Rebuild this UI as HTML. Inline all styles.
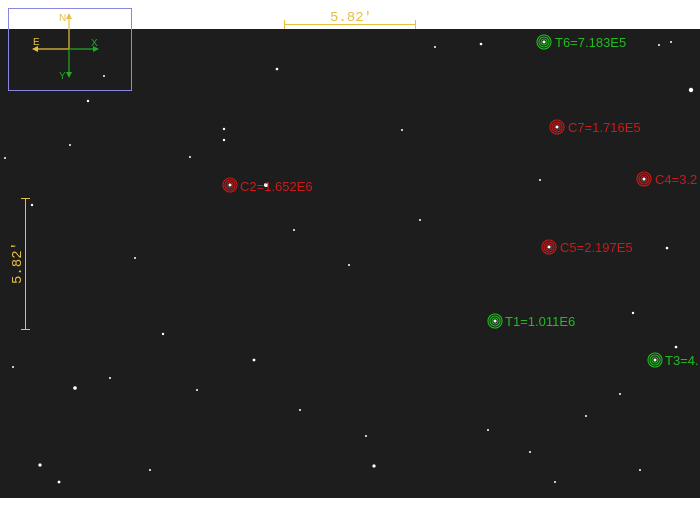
<!DOCTYPE html>
<html><head><meta charset="utf-8"><style>
html,body{margin:0;padding:0;background:#fff;width:700px;height:527px;overflow:hidden}
svg{display:block}
text{font-family:"Liberation Sans",Arial,sans-serif;font-size:13px}
text.m{font-family:"Liberation Mono","DejaVu Sans Mono",monospace;font-size:14px}
text.s{font-size:10px}
</style></head><body>
<svg width="700" height="527" xmlns="http://www.w3.org/2000/svg">
<rect x="0" y="0" width="700" height="527" fill="#fff"/>
<rect x="0" y="29" width="700" height="469" fill="#1d1d1d"/>
<g fill="#fff">
<circle cx="691" cy="90" r="2.2"/><circle cx="481" cy="44" r="1.3"/><circle cx="277" cy="69" r="1.3"/>
<circle cx="224" cy="129" r="1.2"/><circle cx="224" cy="140" r="1.2"/><circle cx="88" cy="101" r="1.2"/>
<circle cx="104" cy="76" r="1"/><circle cx="435" cy="47" r="1"/><circle cx="667" cy="248" r="1.3"/>
<circle cx="266" cy="185" r="2"/><circle cx="32" cy="205" r="1.2"/><circle cx="75" cy="388" r="1.8"/>
<circle cx="40" cy="465" r="1.6"/><circle cx="59" cy="482" r="1.4"/><circle cx="374" cy="466" r="1.6"/>
<circle cx="254" cy="360" r="1.4"/><circle cx="163" cy="334" r="1.2"/><circle cx="633" cy="313" r="1.2"/>
<circle cx="676" cy="347" r="1.3"/><circle cx="366" cy="436" r="1"/><circle cx="488" cy="430" r="1"/>
<circle cx="110" cy="378" r="1"/><circle cx="13" cy="367" r="1"/><circle cx="190" cy="157" r="1"/>
<circle cx="294" cy="230" r="1"/><circle cx="349" cy="265" r="1"/><circle cx="420" cy="220" r="1"/>
<circle cx="5" cy="158" r="1"/><circle cx="659" cy="45" r="1"/><circle cx="671" cy="42" r="1"/>
<circle cx="620" cy="394" r="1"/><circle cx="555" cy="482" r="1"/><circle cx="70" cy="145" r="1"/>
<circle cx="135" cy="258" r="1"/><circle cx="402" cy="130" r="1"/><circle cx="540" cy="180" r="1"/>
<circle cx="586" cy="416" r="1"/><circle cx="197" cy="390" r="1"/><circle cx="300" cy="410" r="1"/>
<circle cx="530" cy="452" r="1"/><circle cx="150" cy="470" r="1"/><circle cx="640" cy="470" r="1"/>
</g>
<rect x="8.5" y="8.5" width="123" height="82" fill="none" stroke="#8888dd" stroke-width="1"/>
<g stroke="#e8c040" stroke-width="1.2"><line x1="69" y1="17" x2="69" y2="49"/><line x1="34" y1="49" x2="69" y2="49"/></g>
<polygon points="69,13 66,19 72,19" fill="#e8c040"/><polygon points="32,49 38,46 38,52" fill="#e8c040"/>
<g stroke="#22aa22" stroke-width="1.2"><line x1="69" y1="49" x2="96" y2="49"/><line x1="69" y1="49" x2="69" y2="75"/></g>
<polygon points="99,49 93,46 93,52" fill="#22aa22"/><polygon points="69,78 66,72 72,72" fill="#22aa22"/>
<text class="s" x="59" y="21" fill="#e8c040">N</text><text class="s" x="33" y="45" fill="#e8c040">E</text>
<text class="s" x="91" y="46" fill="#22aa22">X</text><text class="s" x="59" y="79" fill="#22aa22">Y</text>
<g stroke="#e8c040" stroke-width="1"><line x1="284" y1="24.5" x2="416" y2="24.5"/><line x1="284.5" y1="20" x2="284.5" y2="29"/><line x1="415.5" y1="20" x2="415.5" y2="29"/>
<line x1="25.5" y1="198" x2="25.5" y2="330"/><line x1="21" y1="198.5" x2="30" y2="198.5"/><line x1="21" y1="329.5" x2="30" y2="329.5"/></g>
<text class="m" x="330" y="21" fill="#e8c040">5.82'</text>
<text class="m" transform="translate(21,284) rotate(-90)" fill="#e8c040">5.82'</text>
<g fill="none" stroke="#cc1a1a" stroke-width="1.1">
<circle cx="557" cy="127" r="7"/><circle cx="557" cy="127" r="5"/><circle cx="557" cy="127" r="3"/>
<circle cx="644" cy="179" r="7"/><circle cx="644" cy="179" r="5"/><circle cx="644" cy="179" r="3"/>
<circle cx="230" cy="185" r="7"/><circle cx="230" cy="185" r="5"/><circle cx="230" cy="185" r="3"/>
<circle cx="549" cy="247" r="7"/><circle cx="549" cy="247" r="5"/><circle cx="549" cy="247" r="3"/>
</g>
<g fill="none" stroke="#22bb22" stroke-width="1.1">
<circle cx="544" cy="42" r="7"/><circle cx="544" cy="42" r="5"/><circle cx="544" cy="42" r="3"/>
<circle cx="495" cy="321" r="7"/><circle cx="495" cy="321" r="5"/><circle cx="495" cy="321" r="3"/>
<circle cx="655" cy="360" r="7"/><circle cx="655" cy="360" r="5"/><circle cx="655" cy="360" r="3"/>
</g>
<g fill="#fff"><circle cx="557" cy="127" r="1.5"/><circle cx="644" cy="179" r="1.5"/><circle cx="230" cy="185" r="1.5"/><circle cx="549" cy="247" r="1.5"/><circle cx="544" cy="42" r="1.5"/><circle cx="495" cy="321" r="1.5"/><circle cx="655" cy="360" r="1.5"/></g>
<g fill="#cc1a1a">
<text x="568" y="132">C7=1.716E5</text><text x="655" y="184">C4=3.2</text>
<text x="240" y="191">C2=1.652E6</text><text x="560" y="252">C5=2.197E5</text>
</g>
<g fill="#22bb22">
<text x="555" y="47">T6=7.183E5</text><text x="505" y="326">T1=1.011E6</text><text x="665" y="365">T3=4.</text>
</g>
</svg>
</body></html>
